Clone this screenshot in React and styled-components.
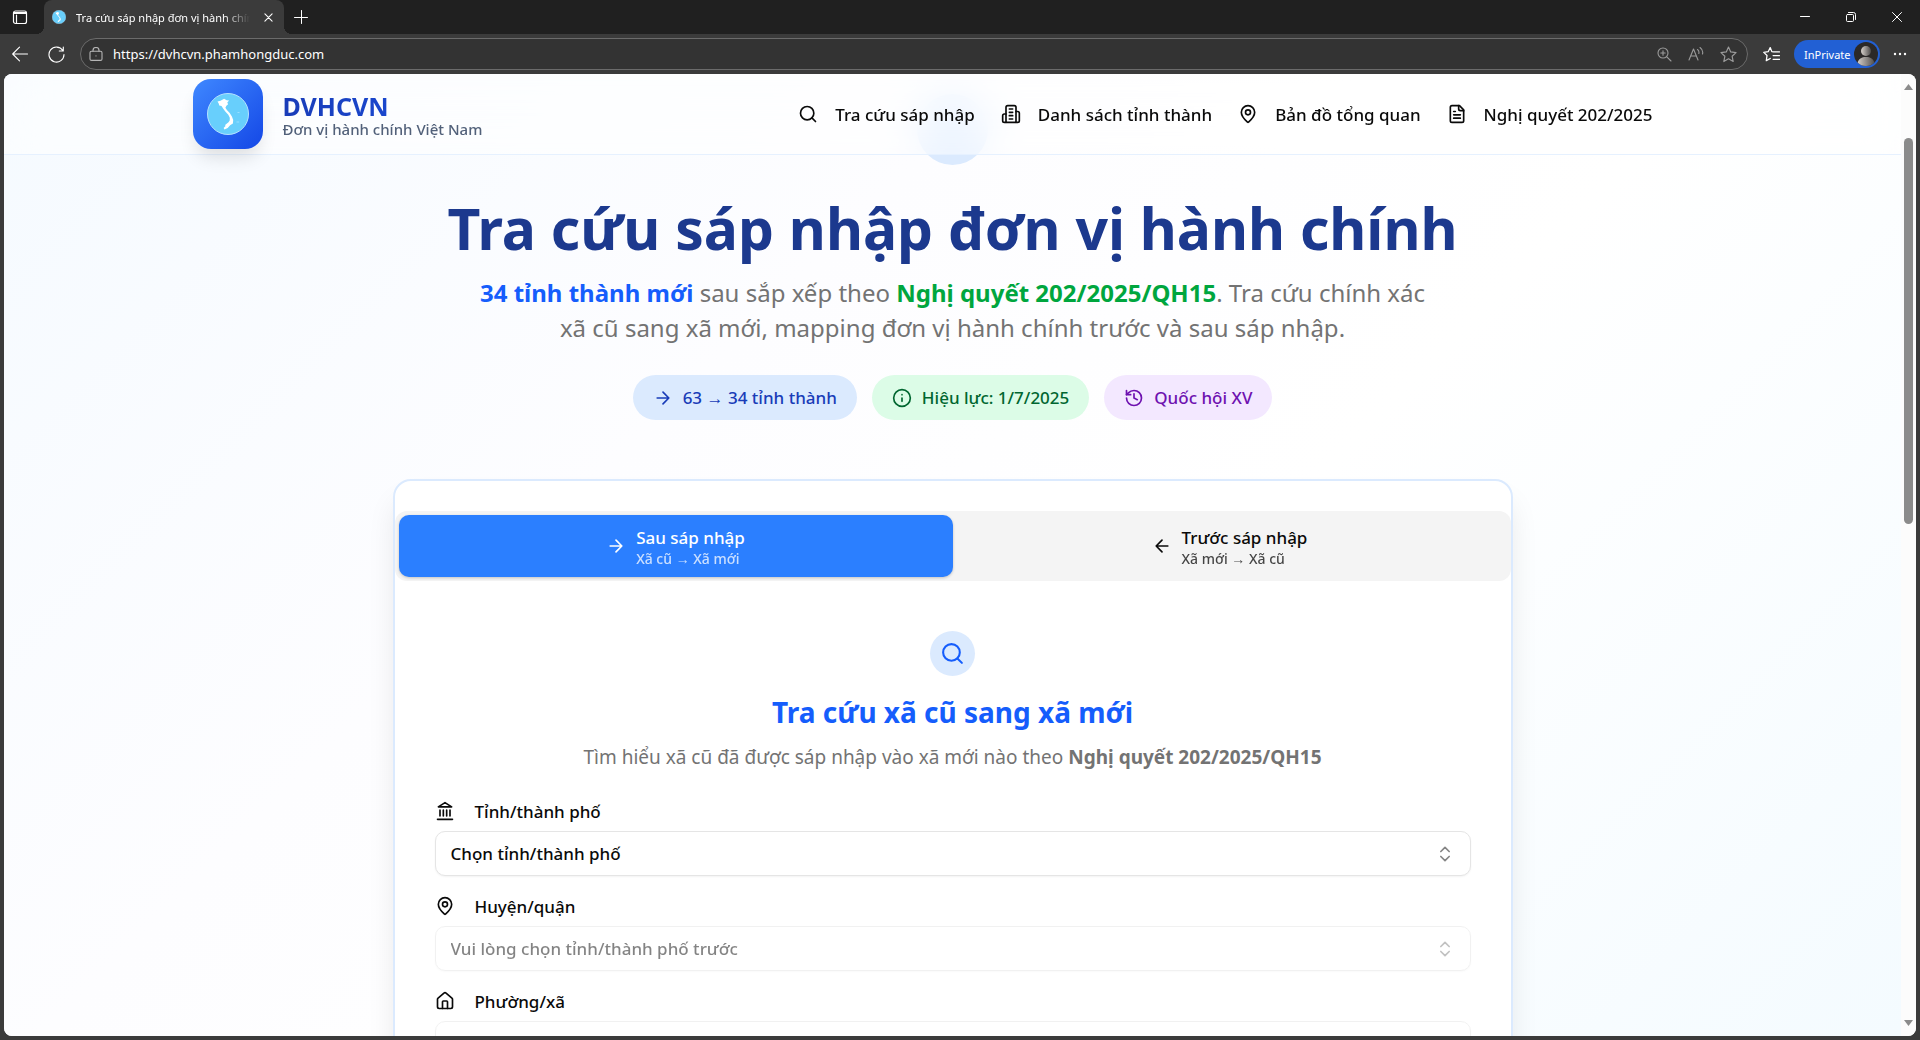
import React from "react";
import styled, { createGlobalStyle, css } from "styled-components";

const UI_FONT = `"Noto Sans", "Open Sans", sans-serif`;

const GlobalStyle = createGlobalStyle`
  *, *::before, *::after { box-sizing: border-box; }
  body { margin: 0; background: #3b3b3b; font-family: ${UI_FONT}; color: #0a0a0a; overflow: hidden; }
  button, input, select { font: inherit; color: inherit; margin: 0; }
  h1, h2, p { margin: 0; }
`;

/* ---------- icons ---------- */

const Svg = styled.svg`
  display: block;
  flex: none;
  width: ${(p) => p.$size || 20}px;
  height: ${(p) => p.$size || 20}px;
  fill: none;
  stroke: currentColor;
  stroke-width: ${(p) => p.$stroke ?? 2};
  stroke-linecap: round;
  stroke-linejoin: round;
`;

const Icon = ({ size, stroke, box = 24, children }) => (
  <Svg $size={size} $stroke={stroke} viewBox={`0 0 ${box} ${box}`} aria-hidden="true">
    {children}
  </Svg>
);

const SearchIcon = (p) => (
  <Icon {...p}><circle cx="11" cy="11" r="8" /><path d="m21 21-4.3-4.3" /></Icon>
);
const BuildingIcon = (p) => (
  <Icon {...p}>
    <path d="M6 22V4a2 2 0 0 1 2-2h8a2 2 0 0 1 2 2v18Z" />
    <path d="M6 12H4a2 2 0 0 0-2 2v6a2 2 0 0 0 2 2h2" />
    <path d="M18 9h2a2 2 0 0 1 2 2v9a2 2 0 0 1-2 2h-2" />
    <path d="M10 6h4M10 10h4M10 14h4M10 18h4" />
  </Icon>
);
const PinIcon = (p) => (
  <Icon {...p}>
    <path d="M20 10c0 4.993-5.539 10.193-7.399 11.799a1 1 0 0 1-1.202 0C9.539 20.193 4 14.993 4 10a8 8 0 0 1 16 0" />
    <circle cx="12" cy="10" r="3" />
  </Icon>
);
const FileIcon = (p) => (
  <Icon {...p}>
    <path d="M15 2H6a2 2 0 0 0-2 2v16a2 2 0 0 0 2 2h12a2 2 0 0 0 2-2V7Z" />
    <path d="M14 2v4a2 2 0 0 0 2 2h4M10 9H8M16 13H8M16 17H8" />
  </Icon>
);
const ArrowRightIcon = (p) => <Icon {...p}><path d="M5 12h14M12 5l7 7-7 7" /></Icon>;
const ArrowLeftIcon = (p) => <Icon {...p}><path d="M19 12H5M12 19l-7-7 7-7" /></Icon>;
const InfoIcon = (p) => (
  <Icon {...p}><circle cx="12" cy="12" r="10" /><path d="M12 16v-4M12 8h.01" /></Icon>
);
const HistoryIcon = (p) => (
  <Icon {...p}>
    <path d="M3 12a9 9 0 1 0 9-9 9.75 9.75 0 0 0-6.74 2.74L3 8" />
    <path d="M3 3v5h5M12 7v5l4 2" />
  </Icon>
);
const LandmarkIcon = (p) => (
  <Icon {...p}>
    <path d="M3 22h18M6 18v-7M10 18v-7M14 18v-7M18 18v-7M12 2l8 5H4Z" />
  </Icon>
);
const HouseIcon = (p) => (
  <Icon {...p}>
    <path d="M15 21v-8a1 1 0 0 0-1-1h-4a1 1 0 0 0-1 1v8" />
    <path d="M3 10a2 2 0 0 1 .709-1.528l7-5.999a2 2 0 0 1 2.582 0l7 5.999A2 2 0 0 1 21 10v9a2 2 0 0 1-2 2H5a2 2 0 0 1-2-2z" />
  </Icon>
);
const ChevronsIcon = (p) => <Icon {...p}><path d="m7 15 5 5 5-5M7 9l5-5 5 5" /></Icon>;

const VietnamMap = ({ size }) => (
  <svg width={size} height={size} viewBox="0 0 42 42" aria-hidden="true">
    <circle cx="21" cy="21" r="20.5" fill="#68cffc" stroke="#b5e2ff" strokeWidth="1" />
    <path
      d="M10.500 8.600l3-.9 3.600-2 2.600 1.600 2.400.3-1.800 2 .8 1.600-1.700 1.600-1 2 1.500 2.200 2.800 3 2.200 3.500 1.300 3.600-.3 3.400-2.800 1.800-2.400 2.600-3.200 1.600-.9-1.400 1.900-2-.4-1.200 3.400-2.600 1.200-1.800.1-2.800-1.500-2.900-3-3.400-2.200-2.800-1.600-2.600-2.200-.4-.6-2z"
      fill="#fff"
    />
    <path d="M30.500 19.500h2M29.500 29h2.600" stroke="#9adfff" strokeWidth="1" />
  </svg>
);

/* ---------- browser frame ---------- */

const Browser = styled.div`
  display: grid;
  grid-template-rows: 34px 40px minmax(0, 1fr);
  height: 100vh;
  color: #fff;
`;

const TitleBar = styled.div`
  display: flex;
  align-items: center;
  background: #202020;
`;

const iconButton = css`
  display: grid;
  place-items: center;
  padding: 0;
  border: 0;
  background: none;
  color: ${(p) => p.$tone || "#fff"};
`;

const ChromeButton = styled.button`
  ${iconButton}
  width: ${(p) => p.$width}px;
  height: 100%;
`;

const Tab = styled.div`
  position: relative;
  display: flex;
  align-items: center;
  width: 240px;
  height: 34px;
  margin-left: 4px;
  padding: 0 8px;
  gap: 10px;
  border-radius: 8px 8px 0 0;
  background: #3b3b3b;
  font-size: 12px;

  &::before, &::after {
    content: "";
    position: absolute;
    bottom: 0;
    width: 8px;
    height: 8px;
  }
  &::before { left: -8px; background: radial-gradient(circle at 0 0, transparent 8px, #3b3b3b 8px); }
  &::after { right: -8px; background: radial-gradient(circle at 100% 0, transparent 8px, #3b3b3b 8px); }
`;

const TabTitle = styled.span`
  flex: 1;
  overflow: hidden;
  font-size: 11px;
  white-space: nowrap;
  mask-image: linear-gradient(90deg, #000 85%, transparent);
`;

const TabClose = styled.button`
  ${iconButton}
  width: 16px;
  height: 16px;
`;

const WindowButtons = styled.div`
  display: flex;
  height: 100%;
  margin-left: auto;
`;

const Toolbar = styled.div`
  display: flex;
  align-items: center;
  background: #3b3b3b;
`;

const AddressBar = styled.div`
  flex: 1;
  display: flex;
  align-items: center;
  height: 32px;
  margin-left: 8px;
  padding: 0 8px;
  gap: 10px;
  border: 1px solid #6b6b6b;
  border-radius: 16px;
  background: #333;
  color: #b5b5b5;
`;

const AddressInput = styled.input`
  flex: 1;
  min-width: 0;
  padding: 0;
  border: 0;
  outline: 0;
  background: none;
  color: #fff;
  font-size: 13px;
`;

const AddressButton = styled.button`
  ${iconButton}
  width: 22px;
`;

const Profile = styled.button`
  display: flex;
  align-items: center;
  justify-content: space-between;
  width: 86px;
  height: 28px;
  padding: 0 2px 0 10px;
  border: 0;
  border-radius: 14px;
  background: #2260d4;
  color: #fff;
  font-size: 11px;
`;

const Avatar = () => (
  <svg width="24" height="24" viewBox="0 0 24 24" aria-hidden="true">
    <defs>
      <linearGradient id="silver"><stop stopColor="#d8d2cc" /><stop offset="1" stopColor="#4c4a49" /></linearGradient>
      <clipPath id="round"><circle cx="12" cy="12" r="12" /></clipPath>
    </defs>
    <circle cx="12" cy="12" r="12" fill="#2b2928" />
    <g clipPath="url(#round)" fill="url(#silver)">
      <circle cx="12" cy="9" r="5" />
      <path d="M3 26c0-8 3-11 9-11s9 3 9 11z" />
    </g>
  </svg>
);

const Viewport = styled.div`
  position: relative;
  display: grid;
  grid-template-columns: minmax(0, 1fr) 15px;
  margin: 0 4px 4px;
  overflow: hidden;
  border-radius: 8px;
  background: #fff;
  color: #0a0a0a;
`;

const Scrollbar = styled.div`
  display: flex;
  flex-direction: column;
  align-items: center;
  justify-content: space-between;
  padding: 10px 0;
  background: #fcfcfc;
  color: #8b8b8b;
`;

const Thumb = styled.div`
  width: 9px;
  height: 41%;
  margin: 48px 0 auto;
  border-radius: 5px;
  background: #8b8b8b;
`;

/* ---------- site ---------- */

const Page = styled.div`
  position: relative;
  overflow: hidden;
  background: linear-gradient(135deg, #f5faff 0%, #fdfdff 35%, #ffffff 60%, #f4fbff 100%);
`;

const Header = styled.header`
  position: absolute;
  inset: 0 0 auto;
  z-index: 1;
  border-bottom: 1px solid #e6f1ff;
  background: rgba(255, 255, 255, 0.5);
  backdrop-filter: blur(20px);
`;

const HeaderInner = styled.div`
  display: flex;
  align-items: center;
  justify-content: space-between;
  max-width: 1600px;
  height: 80px;
  margin: 0 auto;
  padding: 0 100px 0 40px;
`;

const Brand = styled.a`
  display: flex;
  align-items: center;
  gap: 20px;
  color: inherit;
  text-decoration: none;
`;

const BrandTile = styled.span`
  display: grid;
  place-items: center;
  width: 70px;
  height: 70px;
  border-radius: 18px;
  background: linear-gradient(135deg, #3f88ff, #1447e6);
  box-shadow: 0 12px 18px -4px rgba(0, 0, 0, 0.12);
`;

const BrandText = styled.span`
  display: flex;
  flex-direction: column;
  padding-top: 4px;
`;

const BrandName = styled.strong`
  font-size: 25px;
  line-height: 25px;
  color: transparent;
  background: linear-gradient(90deg, #193cb8, #1a50e0);
  background-clip: text;
`;

const BrandNote = styled.span`
  font-size: 15px;
  line-height: 20px;
  font-weight: 500;
  color: #52617a;
`;

const Nav = styled.nav`
  display: flex;
  gap: 26px;
`;

const NavLink = styled.a`
  display: flex;
  align-items: center;
  gap: 17px;
  color: inherit;
  font-size: 17px;
  font-weight: 500;
  text-decoration: none;
  white-space: nowrap;
`;

const Content = styled.main`
  display: flex;
  flex-direction: column;
  align-items: center;
  padding: 20px 40px 0;
`;

const RoundBadge = styled.span`
  display: grid;
  place-items: center;
  flex: none;
  width: ${(p) => p.$size}px;
  height: ${(p) => p.$size}px;
  border-radius: 50%;
  background: #dbeafe;
  color: #155dfc;
`;

const Title = styled.h1`
  margin-top: 28px;
  font-size: 57px;
  line-height: 70px;
  font-weight: 700;
  color: #1c398e;
  text-align: center;
`;

const Lead = styled.p`
  max-width: 960px;
  margin-top: 12px;
  font-size: 24px;
  line-height: 35px;
  color: #737373;
  text-align: center;
`;

const Strong = styled.strong`
  font-weight: 700;
  color: ${(p) => p.$color || "inherit"};
`;

const Pills = styled.div`
  display: flex;
  gap: 15px;
  margin-top: 30px;
`;

const Pill = styled.span`
  display: flex;
  align-items: center;
  gap: 10px;
  height: 45px;
  padding: 0 20px;
  border-radius: 23px;
  background: ${(p) => p.$bg};
  color: ${(p) => p.$color};
  font-size: 17px;
  font-weight: 500;
`;

const Card = styled.section`
  width: 100%;
  max-width: 1120px;
  margin-top: 59px;
  padding-top: 30px;
  border: 2px solid #dbeafe;
  border-radius: 18px;
  background: #fff;
  box-shadow: 0 20px 30px -4px rgba(0, 0, 0, 0.1);
`;

const Tabs = styled.div`
  display: grid;
  grid-template-columns: 1fr 1fr;
  height: 70px;
  padding: 4px;
  border-radius: 12px;
  background: #f4f4f4;
`;

const TabButton = styled.button`
  display: flex;
  align-items: center;
  justify-content: center;
  gap: 10px;
  padding: 0;
  border: 0;
  border-radius: 10px;
  text-align: left;
  background: ${(p) => (p.$active ? "#2b7fff" : "none")};
  color: ${(p) => (p.$active ? "#fff" : "#0a0a0a")};
  box-shadow: ${(p) => (p.$active ? "0 1px 3px rgba(0, 0, 0, 0.2)" : "none")};
`;

const TabText = styled.span`
  display: flex;
  flex-direction: column;
  padding-top: 3px;
  font-size: 17px;
  line-height: 23px;
  font-weight: 500;
`;

const TabNote = styled.span`
  font-size: 14px;
  line-height: 20px;
  opacity: 0.75;
`;

const Panel = styled.div`
  display: flex;
  flex-direction: column;
  align-items: center;
  padding: 50px 40px 40px;
`;

const PanelTitle = styled.h2`
  margin-top: 16px;
  font-size: 28px;
  line-height: 40px;
  color: #155dfc;
`;

const PanelLead = styled.p`
  margin-top: 10px;
  font-size: 19px;
  line-height: 30px;
  color: #737373;
`;

const Form = styled.form`
  display: grid;
  gap: 15px;
  width: 100%;
  margin-top: 24px;
`;

const Field = styled.div`
  display: grid;
  gap: 5px;
`;

const Label = styled.label`
  display: flex;
  align-items: center;
  gap: 20px;
  height: 30px;
  font-size: 17px;
  font-weight: 500;
`;

const SelectBox = styled.div`
  display: grid;
  grid-template-columns: 1fr 52px;
  align-items: center;
  height: 45px;
  opacity: ${(p) => (p.$dim ? 0.5 : 1)};

  > svg { grid-area: 1 / 2; justify-self: center; pointer-events: none; color: #858585; }
`;

const Select = styled.select`
  grid-area: 1 / 1 / 2 / 3;
  width: 100%;
  height: 45px;
  padding: 0 15px;
  border: 1px solid #e5e5e5;
  border-radius: 10px;
  appearance: none;
  background: #fff;
  color: #0a0a0a;
  opacity: 1;
  font-size: 17px;
  font-weight: 500;
  box-shadow: 0 1px 2px rgba(0, 0, 0, 0.05);
`;

const NAV = [
  [SearchIcon, "Tra cứu sáp nhập"],
  [BuildingIcon, "Danh sách tỉnh thành"],
  [PinIcon, "Bản đồ tổng quan"],
  [FileIcon, "Nghị quyết 202/2025"],
];

const PILLS = [
  [ArrowRightIcon, "63 → 34 tỉnh thành", "#dbeafe", "#193cb8"],
  [InfoIcon, "Hiệu lực: 1/7/2025", "#dcfce7", "#016630"],
  [HistoryIcon, "Quốc hội XV", "#f3e8ff", "#6e11b0"],
];

const FIELDS = [
  ["province", LandmarkIcon, "Tỉnh/thành phố", "Chọn tỉnh/thành phố", false],
  ["district", PinIcon, "Huyện/quận", "Vui lòng chọn tỉnh/thành phố trước", true],
  ["ward", HouseIcon, "Phường/xã", "Vui lòng chọn huyện/quận trước", true],
];

function BrowserTop() {
  return (
    <>
      <TitleBar>
        <ChromeButton $width={40} aria-label="Tab actions">
          <Icon size={16} stroke={1.2} box={16}>
            <rect x="1.500" y="2" width="13" height="12.500" rx="2" />
            <path d="M2 3.500h12v1H2z" fill="currentColor" />
            <path d="M4.500 6v8" />
          </Icon>
        </ChromeButton>
        <Tab>
          <VietnamMap size={14} />
          <TabTitle>Tra cứu sáp nhập đơn vị hành chính</TabTitle>
          <TabClose aria-label="Close tab">
            <Icon size={9} stroke={1.2} box={10}><path d="M1 1l8 8M9 1l-8 8" /></Icon>
          </TabClose>
        </Tab>
        <ChromeButton $width={34} aria-label="New tab">
          <Icon size={14} stroke={1} box={14}><path d="M7.500 .5v13M.5 7.500h13" /></Icon>
        </ChromeButton>
        <WindowButtons>
          <ChromeButton $width={46} aria-label="Minimize">
            <Icon size={10} stroke={1} box={10}><path d="M.5 4.500h9" /></Icon>
          </ChromeButton>
          <ChromeButton $width={46} aria-label="Restore">
            <Icon size={10} stroke={1} box={10}>
              <rect x=".5" y="2.500" width="7" height="7" rx="1" />
              <path d="M2.500 .5h5a2 2 0 0 1 2 2v5" />
            </Icon>
          </ChromeButton>
          <ChromeButton $width={46} aria-label="Close window">
            <Icon size={10} stroke={1} box={10}><path d="M.5.5l9 9M9.500.5l-9 9" /></Icon>
          </ChromeButton>
        </WindowButtons>
      </TitleBar>
      <Toolbar>
        <ChromeButton $width={40} aria-label="Back">
          <Icon size={16} stroke={1.1} box={16}><path d="M15.500 8H.7M7.500 1.200L.7 8l6.800 6.800" /></Icon>
        </ChromeButton>
        <ChromeButton $width={32} aria-label="Reload">
          <Icon size={17} stroke={1.1} box={17}><path d="M14.800 4.500A7.500 7.500 0 1 0 16 8.500M15.300 1v4h-4" /></Icon>
        </ChromeButton>
        <AddressBar>
          <Icon size={14} stroke={1.1} box={14}>
            <rect x="1" y="4.200" width="12" height="9.200" rx="1.500" />
            <path d="M4 4.200V3.500a3 3 0 0 1 6 0v.7M7 8.700v.3" />
          </Icon>
          <AddressInput aria-label="Address" defaultValue="https://dvhcvn.phamhongduc.com" />
          <AddressButton $tone="#9b9b9b" aria-label="Zoom">
            <Icon size={15} stroke={1.1} box={15}><circle cx="6" cy="6" r="5" /><path d="M9.800 9.800l4.200 4.200M6 3.800v4.400M3.800 6h4.400" /></Icon>
          </AddressButton>
          <AddressButton $tone="#9b9b9b" aria-label="Read aloud">
            <Icon size={16} stroke={1.1} box={16}><path d="M1 14L5.500 3l4.500 11M2.700 10h5.600M9.500 3.500q2 1.500 1.300 4M12 1.500q3.500 2.500 2.500 6.500" /></Icon>
          </AddressButton>
          <AddressButton $tone="#9b9b9b" aria-label="Add to favorites">
            <Icon size={17} stroke={1.1} box={16}><path d="M8 1l2.100 4.600 5 .6-3.700 3.400 1 5L8 12.100l-4.400 2.500 1-5L.9 6.200l5-.6z" /></Icon>
          </AddressButton>
        </AddressBar>
        <ChromeButton $width={46} aria-label="Favorites">
          <Icon size={17} stroke={1.2} box={16}><path d="M10 5.500L8.300 5.300 6.800 1.500 4.900 5.400.7 6l3.100 2.900-.7 4.900 3.700-2.100M10 5.500h5.500M9.500 9h6M9.500 12.500h6" /></Icon>
        </ChromeButton>
        <Profile>InPrivate<Avatar /></Profile>
        <ChromeButton $width={40} aria-label="Settings and more">
          <Icon size={14} stroke={0} box={14}><g fill="currentColor"><circle cx="2" cy="7" r="1.200" /><circle cx="7" cy="7" r="1.200" /><circle cx="12" cy="7" r="1.200" /></g></Icon>
        </ChromeButton>
      </Toolbar>
    </>
  );
}

function SiteHeader() {
  return (
    <Header>
      <HeaderInner>
        <Brand href="#">
          <BrandTile><VietnamMap size={42} /></BrandTile>
          <BrandText>
            <BrandName>DVHCVN</BrandName>
            <BrandNote>Đơn vị hành chính Việt Nam</BrandNote>
          </BrandText>
        </Brand>
        <Nav>
          {NAV.map(([Glyph, text]) => (
            <NavLink href="#" key={text}><Glyph />{text}</NavLink>
          ))}
        </Nav>
      </HeaderInner>
    </Header>
  );
}

export default function App() {
  return (
    <>
      <GlobalStyle />
      <Browser>
        <BrowserTop />
        <Viewport>
          <Page>
            <SiteHeader />
            <Content>
              <RoundBadge $size={71} />
              <Title>Tra cứu sáp nhập đơn vị hành chính</Title>
              <Lead>
                <Strong $color="#155dfc">34 tỉnh thành mới</Strong> sau sắp xếp theo{" "}
                <Strong $color="#00a63e">Nghị quyết 202/2025/QH15</Strong>. Tra cứu chính xác
                xã cũ sang xã mới, mapping đơn vị hành chính trước và sau sáp nhập.
              </Lead>
              <Pills>
                {PILLS.map(([Glyph, text, bg, color]) => (
                  <Pill key={text} $bg={bg} $color={color}><Glyph />{text}</Pill>
                ))}
              </Pills>
              <Card>
                <Tabs role="tablist">
                  <TabButton role="tab" aria-selected="true" $active>
                    <ArrowRightIcon />
                    <TabText>Sau sáp nhập<TabNote>Xã cũ → Xã mới</TabNote></TabText>
                  </TabButton>
                  <TabButton role="tab" aria-selected="false">
                    <ArrowLeftIcon />
                    <TabText>Trước sáp nhập<TabNote>Xã mới → Xã cũ</TabNote></TabText>
                  </TabButton>
                </Tabs>
                <Panel>
                  <RoundBadge $size={45}><SearchIcon size={25} /></RoundBadge>
                  <PanelTitle>Tra cứu xã cũ sang xã mới</PanelTitle>
                  <PanelLead>
                    Tìm hiểu xã cũ đã được sáp nhập vào xã mới nào theo <Strong>Nghị quyết 202/2025/QH15</Strong>
                  </PanelLead>
                  <Form>
                    {FIELDS.map(([id, Glyph, label, text, disabled]) => (
                      <Field key={id}>
                        <Label htmlFor={id}><Glyph />{label}</Label>
                        <SelectBox $dim={disabled}>
                          <Select id={id} disabled={disabled}><option>{text}</option></Select>
                          <ChevronsIcon />
                        </SelectBox>
                      </Field>
                    ))}
                  </Form>
                </Panel>
              </Card>
            </Content>
          </Page>
          <Scrollbar aria-hidden="true">
            <svg width="9" height="6" viewBox="0 0 9 6"><path d="M0 6l4.500-6L9 6z" fill="currentColor" /></svg>
            <Thumb />
            <svg width="9" height="6" viewBox="0 0 9 6"><path d="M0 0l4.500 6L9 0z" fill="currentColor" /></svg>
          </Scrollbar>
        </Viewport>
      </Browser>
    </>
  );
}
